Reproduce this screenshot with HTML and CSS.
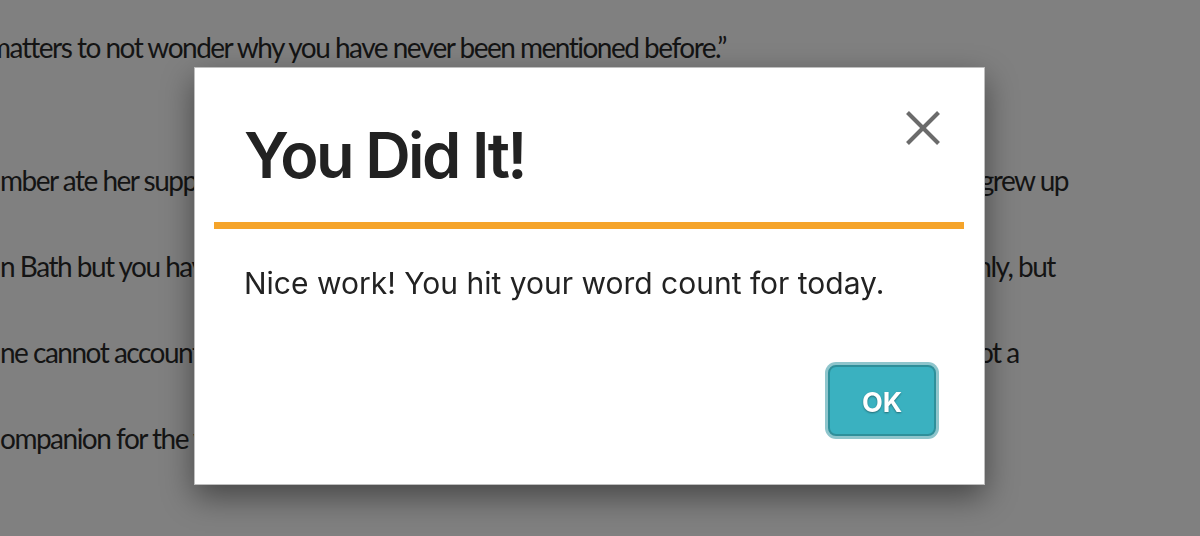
FILE: index.html
```html
<!DOCTYPE html>
<html lang="en">
<head>
  <meta charset="UTF-8">
  <meta name="viewport" content="width=device-width, initial-scale=1.0">
  <title>Word Count Goal</title>
  <link rel="stylesheet" href="styles.css">
</head>
<body>
  <div class="manuscript">
    <p class="para">
      <span class="line first">matters to not wonder why you have never been mentioned before.&rdquo;</span>
    </p>
    <p class="para">
      <span class="line">mber ate her supper alone in the back parlour that evening, while the two younger children grew up</span>
      <span class="line">n Bath but you have never been seen in company with me or my sisters there, not very openly, but</span>
      <span class="line">ne cannot account for a taste so very singular in a grand lady, and yet she is most certainly not a</span>
      <span class="line">ompanion for the winter, and a friend for the long summer months.</span>
    </p>
  </div>

  <div class="overlay">
    <div class="modal">
      <div class="modal-header">
        <h2 class="modal-title">You Did It!</h2>
        <button class="close-button" aria-label="Close">
          <svg width="34" height="34" viewBox="0 0 34 34">
            <line x1="1.5" y1="1.5" x2="32.5" y2="32.5" stroke="#6b6b6b" stroke-width="4"/>
            <line x1="32.5" y1="1.5" x2="1.5" y2="32.5" stroke="#6b6b6b" stroke-width="4"/>
          </svg>
        </button>
      </div>
      <div class="modal-rule"></div>
      <p class="modal-body">Nice work! You hit your word count for today.</p>
      <div class="modal-footer">
        <button class="ok-button">OK</button>
      </div>
    </div>
  </div>
</body>
</html>
```

FILE: styles.css
```css
html, body {
  height: 100%;
}
body {
  margin: 0;
  background: #808080;
  color: #141414;
  overflow: hidden;
}
.manuscript {
  font-family: Lato, "Open Sans", sans-serif;
  font-size: 28px;
  letter-spacing: -1.5px;
  line-height: 86px;
  padding-top: 4px;
}
.para {
  margin: 0 0 47px;
}
.line {
  display: block;
  white-space: nowrap;
}
.line.first {
  text-indent: -12px;
}
.overlay {
  position: fixed;
  top: 0;
  left: 0;
  right: 0;
  bottom: 0;
}
.modal {
  position: absolute;
  top: 67px;
  left: 194px;
  width: 791px;
  height: 418px;
  box-sizing: border-box;
  padding: 0 20px 0 19px;
  background: #fff;
  border: 1px solid rgba(0, 0, 0, 0.25);
  box-shadow: 0 12px 30px rgba(0, 0, 0, 0.45);
  font-family: Inter, "Liberation Sans", sans-serif;
  color: #222;
}
.modal-header {
  padding: 55px 0 35px 30px;
}
.modal-title {
  margin: 0;
  font-size: 63px;
  line-height: 64px;
  font-weight: 600;
  letter-spacing: -2.6px;
}
.close-button {
  position: absolute;
  top: 43px;
  right: 44px;
  padding: 0;
  border: none;
  background: none;
  width: 34px;
  height: 34px;
  cursor: pointer;
}
.close-button svg {
  display: block;
}
.modal-rule {
  height: 7px;
  background: #f5a42a;
}
.modal-body {
  margin: 39px 0 0 30px;
  font-size: 30px;
  line-height: 30px;
}
.modal-footer {
  display: flex;
  justify-content: flex-end;
  padding: 67px 28px 0 0;
}
.ok-button {
  width: 108px;
  height: 71px;
  padding: 3px 0 0;
  border: 2px solid #2e8f9a;
  border-radius: 8px;
  background: #3ab1c0;
  box-shadow: 0 0 0 3px #8ec5cc;
  color: #fff;
  font-family: Inter, "Liberation Sans", sans-serif;
  font-size: 27px;
  font-weight: 700;
  text-shadow: 0 1px 2px rgba(0, 0, 0, 0.4);
  cursor: pointer;
}
```
